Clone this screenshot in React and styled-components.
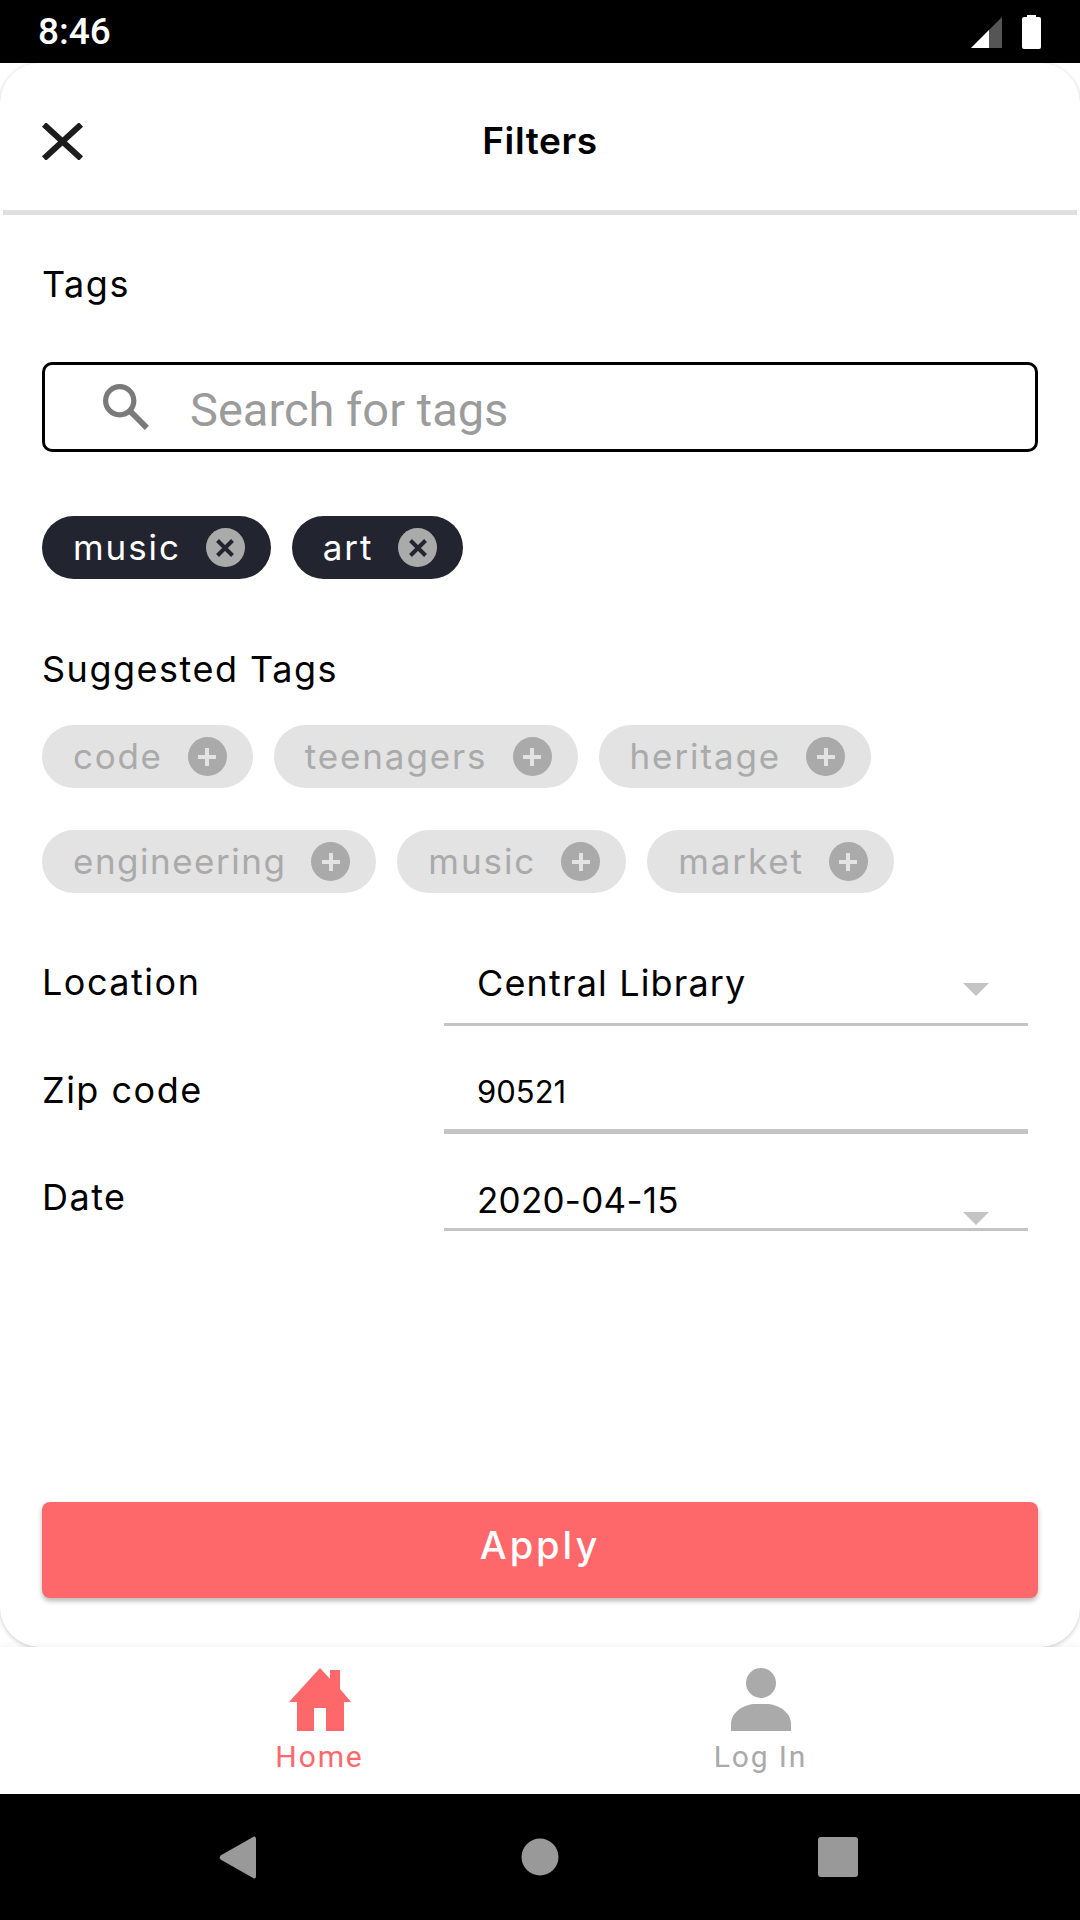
import React from 'react'
import styled, { createGlobalStyle } from 'styled-components'

const GlobalStyle = createGlobalStyle`
  html, body {
    margin: 0;
    padding: 0;
    background: #fff;
  }
  * {
    box-sizing: border-box;
  }
`

const Screen = styled.div`
  width: 1080px;
  height: 1920px;
  display: flex;
  flex-direction: column;
  overflow: hidden;
  background: #fff;
  font-family: Inter, "Noto Sans", sans-serif;
  color: #000;
`

const StatusBar = styled.div`
  height: 63px;
  flex: none;
  background: #000;
  display: flex;
  align-items: center;
  justify-content: space-between;
  padding: 0 37px 0 38px;
  position: relative;
  z-index: 2;
`

const Clock = styled.span`
  font-family: Roboto, sans-serif;
  font-weight: 500;
  font-size: 37px;
  color: #fff;
`

const StatusIcons = styled.div`
  display: flex;
  align-items: center;
`

const Sheet = styled.div`
  flex: 1;
  display: flex;
  flex-direction: column;
  background: #fff;
  border-radius: 40px;
  box-shadow: 0 1px 4px rgba(0, 0, 0, 0.22);
  position: relative;
`

const Header = styled.div`
  height: 147px;
  flex: none;
  display: flex;
  align-items: center;
  justify-content: center;
  position: relative;
`

const CloseButton = styled.div`
  position: absolute;
  left: 41px;
  top: 60px;
  width: 43px;
  height: 37px;
  display: flex;
`

const Title = styled.h1`
  margin: 0 0 -8px;
  font-size: 37px;
  font-weight: 600;
  letter-spacing: 0.6px;
`

const Divider = styled.div`
  height: 5px;
  flex: none;
  margin: 0 3px;
  background: #dfdfdf;
`

const Body = styled.div`
  flex: 1;
  display: flex;
  flex-direction: column;
  padding: 0 42px;
`

const SectionLabel = styled.div`
  font-size: 36px;
  line-height: 40px;
  letter-spacing: 1.5px;
  margin-top: ${p => p.$top}px;
`

const SearchBox = styled.div`
  height: 90px;
  margin-top: 58px;
  border: 3px solid #000;
  border-radius: 10px;
  display: flex;
  align-items: center;
  padding-left: 58px;
  gap: 40px;
`

const SearchText = styled.span`
  font-family: Roboto, sans-serif;
  font-size: 47px;
  padding-top: 5px;
  color: #9b9b9b;
`

const ChipRow = styled.div`
  display: flex;
  gap: 21px;
  margin-top: ${p => p.$top}px;
`

const Chip = styled.div`
  height: 63px;
  display: flex;
  align-items: center;
  gap: 25px;
  padding: 0 26px 0 31px;
  border-radius: 32px;
  font-size: 35px;
  letter-spacing: ${p => p.$spacing || 1.9}px;
  background: ${p => (p.$selected ? '#22252f' : '#e3e3e3')};
  color: ${p => (p.$selected ? '#fff' : '#aaa')};
`

const ChipName = styled.span`
  margin-bottom: 2px;
`

const ChipBadge = styled.span`
  width: 39px;
  height: 39px;
  border-radius: 50%;
  background: #aaa;
  display: flex;
  align-items: center;
  justify-content: center;
  flex: none;
`

const FormRow = styled.div`
  display: grid;
  grid-template-columns: 402px 584px;
  margin-top: ${p => p.$top}px;
`

const FieldLabel = styled.div`
  font-size: 36px;
  line-height: 64px;
  letter-spacing: 1.5px;
`

const FieldValue = styled.div`
  height: ${p => p.$height}px;
  display: flex;
  align-items: center;
  padding: ${p => p.$drop || 0}px 39px ${p => p.$lift || 0}px 33px;
  border-bottom: ${p => p.$line}px solid #c4c4c4;
  font-size: ${p => p.$size}px;
  letter-spacing: ${p => p.$spacing}px;
  position: relative;
`

const Arrow = styled.span`
  position: absolute;
  right: 39px;
  bottom: ${p => p.$bottom}px;
  width: 0;
  height: 0;
  border-left: 13px solid transparent;
  border-right: 13px solid transparent;
  border-top: 13px solid #c4c4c4;
`

const ApplyButton = styled.button`
  height: 96px;
  margin-top: auto;
  margin-bottom: 49px;
  padding: 0 0 10px;
  border: none;
  border-radius: 8px;
  background: #ff686b;
  color: #fff;
  font-family: Inter, sans-serif;
  font-size: 38px;
  font-weight: 500;
  letter-spacing: 3px;
  box-shadow: 0 3px 5px rgba(0, 0, 0, 0.28);
`

const TabBar = styled.div`
  height: 147px;
  flex: none;
  display: grid;
  grid-template-columns: 441px 441px;
  padding: 21px 99px 0;
  background: #fff;
  position: relative;
  box-shadow: 0 -3px 6px rgba(0, 0, 0, 0.04);
`

const Tab = styled.div`
  display: flex;
  flex-direction: column;
  align-items: center;
  color: ${p => (p.$active ? '#ff686b' : '#aaa')};
`

const TabLabel = styled.span`
  font-family: Roboto, sans-serif;
  font-size: 30px;
  line-height: 36px;
  margin-top: 8px;
  letter-spacing: 1.9px;
`

const NavIcons = styled.div`
  height: 126px;
  flex: none;
  background: #000;
  display: flex;
  align-items: center;
  justify-content: space-between;
  padding: 0 222px 0 219px;
  position: relative;
`

const CloseIcon = () => (
  <svg width="43" height="37" viewBox="0 0 43 37">
    <path d="M3 1.5 L40 35.5 M40 1.5 L3 35.5" stroke="#1c1c1c" strokeWidth="6" fill="none" />
  </svg>
)

const RemoveIcon = () => (
  <svg width="20" height="20" viewBox="0 0 20 20">
    <path d="M2.5 2.5 L17.5 17.5 M17.5 2.5 L2.5 17.5" stroke="#22252f" strokeWidth="4" fill="none" />
  </svg>
)

const AddIcon = () => (
  <svg width="20" height="20" viewBox="0 0 20 20">
    <path d="M10 1 V19 M1 10 H19" stroke="#e3e3e3" strokeWidth="4" fill="none" />
  </svg>
)

const SELECTED = ['music', 'art']

const SUGGESTED = [
  [{ name: 'code', spacing: 1.7 }, { name: 'teenagers' }, { name: 'heritage' }],
  [{ name: 'engineering', spacing: 1.5 }, { name: 'music' }, { name: 'market' }],
]

export default function App() {
  return (
    <Screen>
      <GlobalStyle />
      <StatusBar>
        <Clock>8:46</Clock>
        <StatusIcons>
          <svg width="72" height="34" viewBox="0 0 72 34">
            <path d="M0 33 L31 2 V33 Z" fill="#555" />
            <path d="M0 33 L18 15 V33 Z" fill="#fff" />
            <path d="M51 4 A2 2 0 0 1 53 2 H56 V0 H65 V2 H68 A2 2 0 0 1 70 4 V32 A2 2 0 0 1 68 34 H53 A2 2 0 0 1 51 32 Z" fill="#fff" />
          </svg>
        </StatusIcons>
      </StatusBar>

      <Sheet>
        <Header>
          <CloseButton><CloseIcon /></CloseButton>
          <Title>Filters</Title>
        </Header>
        <Divider />
        <Body>
          <SectionLabel $top={49}>Tags</SectionLabel>
          <SearchBox>
            <svg width="47" height="47" viewBox="0 0 45 45">
              <circle cx="16" cy="16" r="13.5" stroke="#7a7a7a" strokeWidth="5" fill="none" />
              <path d="M26 26 L42 42" stroke="#7a7a7a" strokeWidth="5.5" fill="none" />
            </svg>
            <SearchText>Search for tags</SearchText>
          </SearchBox>

          <ChipRow $top={64}>
            {SELECTED.map(name => (
              <Chip key={name} $selected>
                <ChipName>{name}</ChipName>
                <ChipBadge><RemoveIcon /></ChipBadge>
              </Chip>
            ))}
          </ChipRow>

          <SectionLabel $top={70}>Suggested Tags</SectionLabel>
          {SUGGESTED.map((row, i) => (
            <ChipRow key={i} $top={i === 0 ? 36 : 42}>
              {row.map(t => (
                <Chip key={t.name} $spacing={t.spacing}>
                  <ChipName>{t.name}</ChipName>
                  <ChipBadge><AddIcon /></ChipBadge>
                </Chip>
              ))}
            </ChipRow>
          ))}

          <FormRow $top={57}>
            <FieldLabel>Location</FieldLabel>
            <FieldValue $height={76} $line={3} $size={36} $spacing={1.15} $lift={8}>
              Central Library
              <Arrow $bottom={27} />
            </FieldValue>
          </FormRow>
          <FormRow $top={32}>
            <FieldLabel>Zip code</FieldLabel>
            <FieldValue $height={76} $line={5} $size={31} $spacing={0} $lift={5}>90521</FieldValue>
          </FormRow>
          <FormRow $top={31}>
            <FieldLabel>Date</FieldLabel>
            <FieldValue $height={66} $line={3} $size={35} $spacing={0.25} $drop={6}>
              2020-04-15
              <Arrow $bottom={3} />
            </FieldValue>
          </FormRow>

          <ApplyButton>Apply</ApplyButton>
        </Body>
      </Sheet>

      <TabBar>
        <Tab $active>
          <svg width="62" height="63" viewBox="0 0 62 63">
            <path d="M31 0 L41 11 V2 H51 V21 L62 34 H55 V63 H37 V40 H25 V63 H8 V34 H0 Z" fill="#ff686b" />
          </svg>
          <TabLabel>Home</TabLabel>
        </Tab>
        <Tab>
          <svg width="60" height="63" viewBox="0 0 60 63">
            <circle cx="30" cy="15" r="15" fill="#aaa" />
            <path d="M0 63 V56 C0 44 13 36 25 36 H35 C47 36 60 44 60 56 V63 Z" fill="#aaa" />
          </svg>
          <TabLabel>Log In</TabLabel>
        </Tab>
      </TabBar>

      <NavIcons>
        <svg width="42" height="43" viewBox="0 0 42 43">
          <path d="M35 0.5 Q37 0 37 3 V40 Q37 43 35 42.5 L1.5 23.5 Q0 21.5 1.5 19.5 Z" fill="#999" />
        </svg>
        <svg width="38" height="38" viewBox="0 0 38 38">
          <circle cx="19" cy="19" r="18.5" fill="#999" />
        </svg>
        <svg width="40" height="40" viewBox="0 0 40 40">
          <rect width="40" height="40" rx="3" fill="#999" />
        </svg>
      </NavIcons>
    </Screen>
  )
}
